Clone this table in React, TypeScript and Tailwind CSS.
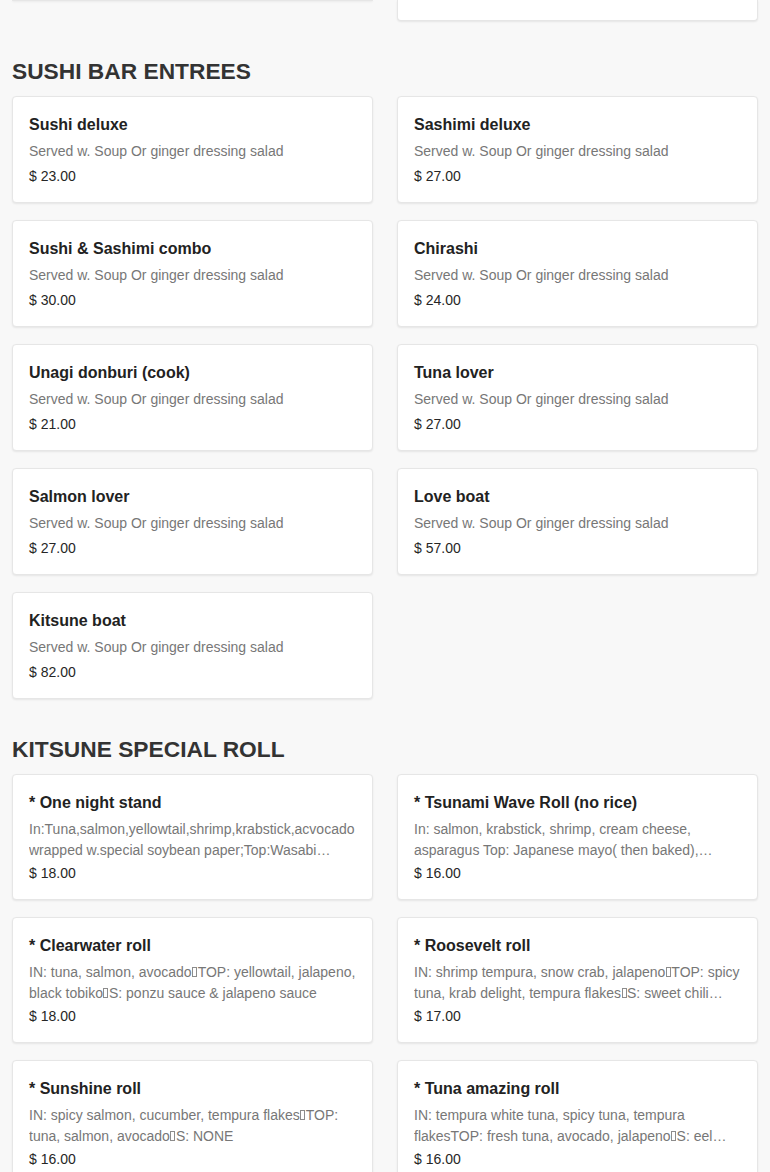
import type React from "react"

type Item = {
  name: string
  desc: React.ReactNode
  price: string
}

const SALAD = "Served w. Soup Or ginger dressing salad"

const Sep = () => (
  <span
    aria-hidden
    className="mx-[0.5px] inline-block h-[10px] w-[5px] border border-[#8c8c8c]"
  />
)

const ENTREES: Item[] = [
  { name: "Sushi deluxe", desc: SALAD, price: "23.00" },
  { name: "Sashimi deluxe", desc: SALAD, price: "27.00" },
  { name: "Sushi & Sashimi combo", desc: SALAD, price: "30.00" },
  { name: "Chirashi", desc: SALAD, price: "24.00" },
  { name: "Unagi donburi (cook)", desc: SALAD, price: "21.00" },
  { name: "Tuna lover", desc: SALAD, price: "27.00" },
  { name: "Salmon lover", desc: SALAD, price: "27.00" },
  { name: "Love boat", desc: SALAD, price: "57.00" },
  { name: "Kitsune boat", desc: SALAD, price: "82.00" },
]

const SPECIAL: Item[] = [
  {
    name: "* One night stand",
    desc: "In:Tuna,salmon,yellowtail,shrimp,krabstick,acvocado wrapped w.special soybean paper;Top:Wasabi tobiko,eel sauce,spicy mayo",
    price: "18.00",
  },
  {
    name: "* Tsunami Wave Roll (no rice)",
    desc: "In: salmon, krabstick, shrimp, cream cheese, asparagus Top: Japanese mayo( then baked), scallion, masago, eel sauce",
    price: "16.00",
  },
  {
    name: "* Clearwater roll",
    desc: (
      <>
        IN: tuna, salmon, avocado<Sep />TOP: yellowtail, jalapeno, black tobiko<Sep />S: ponzu sauce &amp; jalapeno sauce
      </>
    ),
    price: "18.00",
  },
  {
    name: "* Roosevelt roll",
    desc: (
      <>
        IN: shrimp tempura, snow crab, jalapeno<Sep />TOP: spicy tuna, krab delight, tempura flakes<Sep />S: sweet chili sauce, eel sauce
      </>
    ),
    price: "17.00",
  },
  {
    name: "* Sunshine roll",
    desc: (
      <>
        IN: spicy salmon, cucumber, tempura flakes<Sep />TOP: tuna, salmon, avocado<Sep />S: NONE
      </>
    ),
    price: "16.00",
  },
  {
    name: "* Tuna amazing roll",
    desc: (
      <>
        IN: tempura white tuna, spicy tuna, tempura flakesTOP: fresh tuna, avocado, jalapeno<Sep />S: eel sauce, spicy mayo
      </>
    ),
    price: "16.00",
  },
]

const cardClass =
  "rounded-[4px] border border-[#e6e6e6] bg-white shadow-[0_1px_2px_rgba(0,0,0,0.08)]"

const MenuCard: React.FC<{ item: Item }> = ({ item }) => (
  <div className={`${cardClass} px-4 pt-[17px] pb-[15px]`}>
    <h3 className="text-[16px] leading-[22px] font-bold text-[#222222]">{item.name}</h3>
    <p className="mt-[5px] line-clamp-2 max-h-[40px] text-[14px] leading-[21px] text-[#777777]">
      {item.desc}
    </p>
    <p className="mt-[4px] text-[14px] leading-[21px] text-[#262626]">$ {item.price}</p>
  </div>
)

const Section: React.FC<{ title: string; items: Item[] }> = ({ title, items }) => (
  <section className="mt-[36px]">
    <h2 className="mb-[11px] text-[22.75px] leading-[28px] font-bold uppercase text-[#333333]">{title}</h2>
    <div className="grid grid-cols-2 items-start gap-x-6 gap-y-[17px]">
      {items.map((item) => (
        <MenuCard key={item.name} item={item} />
      ))}
    </div>
  </section>
)

export default function App() {
  return (
    <div
      className="min-h-screen bg-[#f8f8f8] px-3 pb-10"
      style={{ fontFamily: '"Liberation Sans", Arial, sans-serif' }}
    >
      {/* bottom edge of the previous section's last row, scrolled off the top */}
      <div className="grid grid-cols-2 items-start gap-x-6">
        <div className={`${cardClass} h-px rounded-t-none border-t-0`} />
        <div className={`${cardClass} h-[21px] rounded-t-none border-t-0`} />
      </div>

      <Section title="Sushi Bar Entrees" items={ENTREES} />
      <Section title="Kitsune Special Roll" items={SPECIAL} />
    </div>
  )
}
